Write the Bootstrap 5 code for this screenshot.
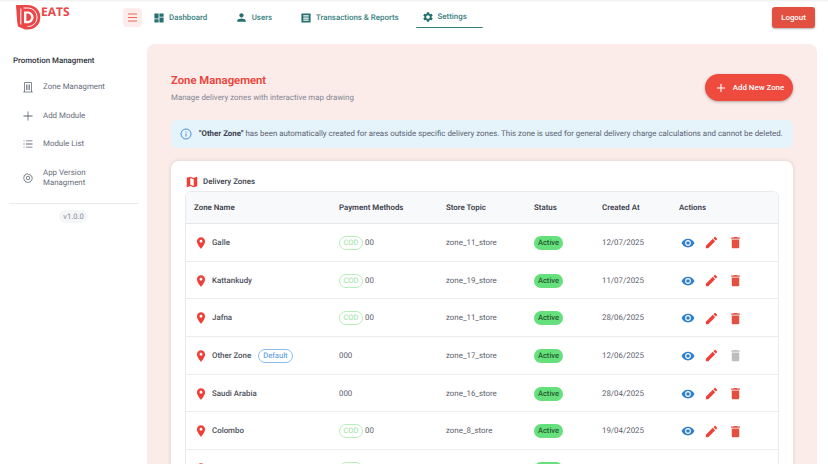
<!DOCTYPE html>
<html lang="en">
<head>
<meta charset="utf-8">
<title>Zone Management</title>
<link rel="stylesheet" href="https://cdn.jsdelivr.net/npm/bootstrap@5.3.0/dist/css/bootstrap.min.css">
<style>
html,body{height:464px;overflow:hidden;background:#fff;font-family:Roboto,"Liberation Sans",sans-serif;font-size:7.9px;color:#444b57;text-rendering:geometricPrecision}
svg{display:block;fill:currentColor;flex:none}
.topbar{height:44px;padding:0 13px 0 16px;box-shadow:inset 0 2px 2px -1px rgba(0,0,0,.07);flex-wrap:nowrap}
.brandbox{width:107px;height:44px;color:#ec4649;padding-top:5px}
.eats{font:700 12px/1 "Open Sans",sans-serif;margin:1px 0 0 0}
.menubtn{width:19px;height:19px;margin-top:8px;background:#fdecea;color:#e9675f;border:0;border-radius:4px;padding:0;display:flex;align-items:center;justify-content:center}
.navset{margin:7px 0 0 6px;gap:0;flex-wrap:nowrap}
.navset .nav-link{color:#38807e;font-size:7.9px;font-weight:500;display:flex;align-items:center;height:21px;padding:0 6px;gap:5px;border-radius:0}
.navset svg{color:#23706e}
.nav-a{margin-right:15.500px}
.nav-b{margin-right:17px;gap:4px !important}
.nav-c{margin-right:11.500px}
.navset .nav-link.on{width:67px;border-bottom:1.5px solid #2f7f7d;border-radius:1px;padding-left:5.500px;gap:4px}
.logoutbtn{background:#e25041;color:#fff;font-size:7.9px;font-weight:500;border:0;border-radius:3px;width:43px;height:21px;margin-top:7px;padding:0;box-shadow:0 1px 2px rgba(0,0,0,.3)}
.sidebar{width:147px;flex:none;padding:0 9px}
.side-title{font-size:7.9px;font-weight:500;color:#2c323a;padding:12px 0 0 4px;line-height:10px;margin-bottom:7px}
.side-link{color:#666d79;display:flex;align-items:center;gap:9px;padding:0 0 0 13px;line-height:10.7px}
.side-link svg{color:#5c6470}
.side-h{height:28.6px}
.side-last{padding-top:9px;padding-bottom:14px}
.side-rule{border-color:#e8eaef;opacity:1;margin:0}
.verbox{padding-top:6px}
.verpill{background:#f5f6f8;color:#858b95;font-size:7.6px;border-radius:7px;padding:0 4px;line-height:13px}
.mainpanel{width:670px;background:#fbecea;border-radius:8px 8px 0 0;padding:0 24px;height:420px;overflow:hidden}
.headrow{height:76px;padding-top:30px}
.zone-h{color:#ee4038;font-size:11.3px;font-weight:600;line-height:14px;margin:0 0 4px}
.zone-sub{color:#7f8590;font-size:7.9px;line-height:11px;margin:0}
.addbtn{background:#ee4a3e;color:#fff;border:0;border-radius:14px;width:88px;height:27px;font-size:7.9px;font-weight:500;display:flex;align-items:center;justify-content:center;gap:5px;padding:0;box-shadow:0 1px 3px rgba(0,0,0,.3)}
.addbtn:hover{background:#ee4a3e;color:#fff}
.infobox{background:#e5f3fb;color:#5a6270;border:0;border-radius:6px;height:28px;padding:0 0 0 9px;margin:0 0 13px;gap:7px;font-size:7.9px;white-space:nowrap}
.infobox svg{color:#4a90d9}
.infobox b{font-weight:700;color:#3c424c}
.zonecard{border:0;border-radius:8px 8px 0 0;box-shadow:0 0 4px rgba(0,0,0,.13);padding:0 14px}
.zonecard-title{font-size:7.9px;font-weight:500;color:#3a404a;height:30px;gap:4px;padding-top:11px}
.zonecard-title svg{color:#ee4038}
.tablewrap{border:1px solid #e9ebef;border-bottom:0;border-radius:6px 6px 0 0;overflow:hidden}
.zonetable{margin:0;table-layout:fixed;width:592px;font-size:7.9px}
.zonetable th{background:#f8f9fb;color:#3c424d;font-weight:600;height:31.5px;padding:1px 0 0;vertical-align:middle;border-bottom:1px solid #e6e8ec}
.zonetable td{height:37.7px;padding:1px 0 0;vertical-align:middle;border-bottom:1px solid #ecedf0;color:#5a606b}
.zonetable th:first-child,.zonetable td:first-child{padding-left:8px}
.cell-name{display:flex;align-items:center;gap:4px;font-weight:500;color:#4a505a}
.cell-name svg{color:#ee4038}
.pill{display:inline-block;border-radius:7px;font-size:7.6px;line-height:12px;padding:0 4px;font-weight:400;background:transparent}
.pill-cod{border:1px solid #b5efb9;color:#9be3a3;width:24px;text-align:center;padding:0}
.pill-def{border:1px solid #8dbdee;color:#4a94dc;margin-left:3px;padding:0 4px}
.pill-on{background:#65e07c;color:#285c34;font-weight:500;width:29px;text-align:center;padding:0;line-height:14px;border-radius:7px}
.muted-x{color:#8a8f98}
.acts{display:flex;align-items:center;gap:9px;padding-left:2px}
.c-eye{color:#2f7fcf}.c-pen{color:#ee4038}.c-bin{color:#e25041}.c-off{color:#bdbdbd}
</style>
</head>
<body>
<nav class="navbar topbar d-flex align-items-start bg-white">
  <div class="brandbox d-flex align-items-start">
    <svg width="25" height="25" viewBox="0 0 25 25"><path fill="#ec4649" d="M0 0h11.500c7.500 0 12.800 5 12.800 12.200S19 24.500 11.500 24.500H9L2 21.500 1.200 17z"/><path fill="none" stroke="#fff" stroke-width="1" d="M4.800 3.500V19.500M7.500 3h4c5.500 0 9.500 3.800 9.500 9.300s-4 9.200-9.500 9.200"/><path fill="#fff" d="M8 6.500h3.500c3.500 0 6 2.500 6 5.800s-2.500 6-6 6H8z"/><path fill="#ec4649" d="M10.400 8.600h1.200c2 0 3.500 1.500 3.500 3.700s-1.500 3.800-3.500 3.800h-1.200z"/></svg>
    <span class="eats">EATS</span>
  </div>
  <button class="menubtn" aria-label="Menu"><svg width="11" height="9" viewBox="0 0 11 9"><path d="M1 0.500h9v1H1zM1 4h9v1H1zM1 7.500h9v1H1z"/></svg></button>
  <div class="nav navset flex-grow-1">
    <a class="nav-link nav-a" href="#"><svg width="10" height="10" viewBox="0 0 24 24"><path d="M1 13h10V1H1v12zm0 10h10v-8H1v8zm12 0h10V11H13v12zm0-22v8h10V1H13z"/></svg>Dashboard</a>
    <a class="nav-link nav-b" href="#"><svg width="13" height="13" viewBox="0 0 24 24"><path d="M12 12c2.210 0 4-1.790 4-4s-1.790-4-4-4-4 1.790-4 4 1.790 4 4 4zm0 2c-2.670 0-8 1.340-8 4v2h16v-2c0-2.660-5.330-4-8-4z"/></svg>Users</a>
    <a class="nav-link nav-c" href="#"><svg width="10" height="10" viewBox="0 0 24 24"><path fill-rule="evenodd" d="M1 1h22v22H1zM5.500 5.500v3h13v-3zm0 5v3h13v-3zm0 5v3h13v-3z"/></svg>Transactions &amp; Reports</a>
    <a class="nav-link on" href="#"><svg width="12" height="12" viewBox="0 0 24 24"><path d="M19.140 12.940c.04-.3.060-.61.060-.94 0-.32-.02-.64-.07-.94l2.030-1.580c.18-.14.23-.41.12-.61l-1.920-3.320c-.12-.22-.37-.29-.59-.22l-2.390.96c-.5-.38-1.030-.7-1.620-.94l-.36-2.540c-.04-.24-.24-.41-.48-.41h-3.840c-.24 0-.43.17-.47.41l-.36 2.540c-.59.24-1.130.57-1.620.94l-2.390-.96c-.22-.08-.47 0-.59.22L2.740 8.870c-.12.21-.08.47.12.61l2.030 1.580c-.05.3-.09.63-.09.94s.02.64.07.94l-2.030 1.580c-.18.14-.23.41-.12.61l1.920 3.320c.12.22.37.29.59.22l2.390-.96c.5.38 1.030.7 1.620.94l.36 2.540c.05.24.24.41.48.41h3.840c.24 0 .44-.17.47-.41l.36-2.540c.59-.24 1.130-.56 1.620-.94l2.390.96c.22.08.47 0 .59-.22l1.920-3.320c.12-.22.07-.47-.12-.61l-2.010-1.580zM12 15.600c-1.980 0-3.600-1.620-3.600-3.600s1.620-3.600 3.600-3.600 3.600 1.620 3.600 3.600-1.620 3.600-3.600 3.600z"/></svg>Settings</a>
  </div>
  <button class="btn logoutbtn">Logout</button>
</nav>

<div class="d-flex">
  <aside class="sidebar">
    <div class="side-title">Promotion Managment</div>
    <a class="side-link side-h text-decoration-none" href="#"><svg width="12" height="12" viewBox="0 0 24 24" style="fill:none" stroke="currentColor" stroke-width="1.500"><path d="M5 22V3h14v19M2.500 22h19M9 7v11M12 7v11M15 7v11"/></svg>Zone Managment</a>
    <a class="side-link side-h text-decoration-none" href="#"><svg width="12" height="12" viewBox="0 0 24 24"><path d="M11.200 3h1.600v8.200H21v1.600h-8.200V21h-1.600v-8.200H3v-1.600h8.200z"/></svg>Add Module</a>
    <a class="side-link side-h text-decoration-none" href="#"><svg width="12" height="12" viewBox="0 0 24 24"><path d="M3 5h2v1.600H3zM8 5h13v1.600H8zM3 11.200h2v1.600H3zM8 11.200h13v1.600H8zM3 17.400h2V19H3zM8 17.400h13V19H8z"/></svg>Module List</a>
    <a class="side-link side-last text-decoration-none" href="#"><svg width="12" height="12" viewBox="0 0 24 24" style="fill:none" stroke="currentColor" stroke-width="1.600"><path d="M12 2.500l2 2.300 3-.6 1 2.900 2.900 1-.6 3 2 1-2 2.300.6 3-2.900 1-1 2.900-3-.6-2 2.300-2-2.300-3 .6-1-2.900-2.900-1 .6-3-2-2.300 2-2.300-.6-3 2.900-1 1-2.900 3 .6z" transform="translate(1.200 1.200) scale(.9)"/><circle cx="12" cy="12" r="3.500"/></svg><span>App Version<br>Managment</span></a>
    <hr class="side-rule">
    <div class="text-center verbox"><span class="verpill d-inline-block">v1.0.0</span></div>
  </aside>

  <main class="mainpanel">
    <div class="headrow d-flex justify-content-between align-items-start">
      <div>
        <h1 class="zone-h">Zone Management</h1>
        <p class="zone-sub">Manage delivery zones with interactive map drawing</p>
      </div>
      <button class="btn addbtn"><svg width="14" height="14" viewBox="0 0 24 24"><path d="M19 13h-6v6h-2v-6H5v-2h6V5h2v6h6v2z"/></svg>Add New Zone</button>
    </div>

    <div class="alert infobox d-flex align-items-center" role="alert">
      <svg width="12" height="12" viewBox="0 0 24 24" style="fill:none" stroke="currentColor" stroke-width="2"><circle cx="12" cy="12" r="10"/><path d="M12 11v6M12 7v2"/></svg>
      <span><b>"Other Zone"</b> has been automatically created for areas outside specific delivery zones. This zone is used for general delivery charge calculations and cannot be deleted.</span>
    </div>

    <section class="card zonecard">
      <div class="zonecard-title d-flex align-items-center"><svg width="14" height="14" viewBox="0 0 24 24"><path d="M20.500 3l-.16.030L15 5.100 9 3 3.360 4.900c-.21.070-.36.250-.36.480V20.500c0 .28.220.5.5.5l.16-.03L9 18.900l6 2.100 5.640-1.900c.21-.07.36-.25.36-.48V3.500c0-.28-.22-.5-.5-.5zM15 19l-6-2.110V5l6 2.110V19z"/></svg>Delivery Zones</div>
      <div class="tablewrap">
        <table class="table zonetable">
          <colgroup><col style="width:153px"><col style="width:107px"><col style="width:88px"><col style="width:68px"><col style="width:77px"><col></colgroup>
          <thead><tr><th>Zone Name</th><th>Payment Methods</th><th>Store Topic</th><th>Status</th><th>Created At</th><th>Actions</th></tr></thead>
          <tbody id="rows"></tbody>
        </table>
      </div>
    </section>
  </main>
</div>

<script src="https://cdn.jsdelivr.net/npm/bootstrap@5.3.0/dist/js/bootstrap.bundle.min.js"></script>
<script>
const pin='<svg width="14" height="14" viewBox="0 0 24 24"><path d="M12 2C8.130 2 5 5.130 5 9c0 5.250 7 13 7 13s7-7.750 7-13c0-3.870-3.130-7-7-7zm0 9.500c-1.380 0-2.500-1.120-2.500-2.500s1.120-2.500 2.500-2.500 2.500 1.120 2.500 2.500-1.120 2.500-2.500 2.500z"/></svg>';
const eye='<svg class="c-eye" width="14" height="14" viewBox="0 0 24 24"><path d="M12 4.500C7 4.500 2.730 7.610 1 12c1.730 4.390 6 7.500 11 7.500s9.270-3.110 11-7.500c-1.730-4.390-6-7.500-11-7.500zM12 17c-2.760 0-5-2.240-5-5s2.240-5 5-5 5 2.240 5 5-2.240 5-5 5zm0-8c-1.660 0-3 1.340-3 3s1.340 3 3 3 3-1.340 3-3-1.340-3-3-3z"/></svg>';
const pen='<svg class="c-pen" width="15" height="15" viewBox="0 0 24 24"><path d="M3 17.250V21h3.750L17.810 9.940l-3.750-3.750L3 17.250zM20.710 7.040c.39-.39.39-1.020 0-1.410l-2.340-2.340c-.39-.39-1.020-.39-1.410 0l-1.830 1.830 3.750 3.750 1.830-1.830z"/></svg>';
const bin=c=>'<svg class="'+c+'" width="15" height="15" viewBox="0 0 24 24"><path d="M6 19c0 1.100.9 2 2 2h8c1.100 0 2-.9 2-2V7H6v12zM19 4h-3.500l-1-1h-5l-1 1H5v2h14V4z"/></svg>';
const data=[["Galle",1,"zone_11_store","12/07/2025",0],["Kattankudy",1,"zone_19_store","11/07/2025",0],["Jafna",1,"zone_11_store","28/06/2025",0],["Other Zone",0,"zone_17_store","12/06/2025",1],["Saudi Arabia",0,"zone_16_store","28/04/2025",0],["Colombo",1,"zone_8_store","19/04/2025",0]];
const rowHtml=r=>'<tr><td><div class="cell-name">'+pin+'<span>'+r[0]+'</span>'+(r[4]?'<span class="pill pill-def">Default</span>':'')+'</div></td><td>'+(r[1]?'<span class="pill pill-cod">COD</span> 00':'000')+'</td><td class="muted-x">'+r[2]+'</td><td><span class="pill pill-on">Active</span></td><td class="muted-x">'+r[3]+'</td><td><div class="acts">'+eye+pen+bin(r[4]?'c-off':'c-bin')+'</div></td></tr>';
/* last row is only just visible at the bottom edge: pin and pill tops */
const partial='<tr><td><div class="cell-name">'+pin+'</div></td><td><span class="pill pill-cod">&nbsp;</span></td><td></td><td><span class="pill pill-on">&nbsp;</span></td><td></td><td></td></tr>';
document.getElementById('rows').innerHTML=data.map(rowHtml).join('')+partial;
</script>
</body>
</html>
